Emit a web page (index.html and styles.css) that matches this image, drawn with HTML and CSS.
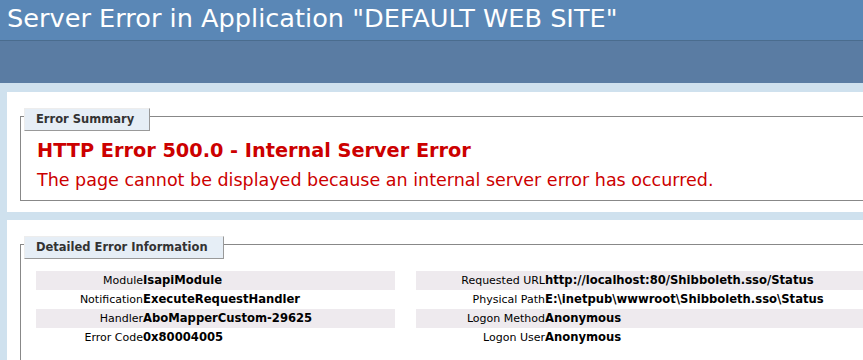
FILE: index.html
```html
<!DOCTYPE html>
<html lang="en">
<head>
    <meta charset="UTF-8">
    <title>IIS 7.5 Detailed Error - 500.0 - Internal Server Error</title>
    <link rel="stylesheet" href="styles.css">
</head>
<body>
    <div class="header">
        <h1>Server Error in Application "DEFAULT WEB SITE"</h1>
    </div>
    <div class="server-version"></div>
    <div class="content">
        <div class="summary-container">
            <div class="fieldset">
                <div class="legend">Error Summary</div>
                <h2>HTTP Error 500.0 - Internal Server Error</h2>
                <h3>The page cannot be displayed because an internal server error has occurred.</h3>
            </div>
        </div>
        <div class="content-container">
            <div class="fieldset">
                <div class="legend">Detailed Error Information</div>
                <div class="details-row">
                    <table class="details-left">
                        <tr class="alt"><th>Module</th><td>IsapiModule</td></tr>
                        <tr><th>Notification</th><td>ExecuteRequestHandler</td></tr>
                        <tr class="alt"><th>Handler</th><td>AboMapperCustom-29625</td></tr>
                        <tr><th>Error Code</th><td>0x80004005</td></tr>
                    </table>
                    <table class="details-right">
                        <tr class="alt"><th>Requested URL</th><td>http://localhost:80/Shibboleth.sso/Status</td></tr>
                        <tr><th>Physical Path</th><td>E:\inetpub\wwwroot\Shibboleth.sso\Status</td></tr>
                        <tr class="alt"><th>Logon Method</th><td>Anonymous</td></tr>
                        <tr><th>Logon User</th><td>Anonymous</td></tr>
                    </table>
                </div>
            </div>
        </div>
    </div>
</body>
</html>
```

FILE: styles.css
```css
html, body {
    height: 100%;
}
body {
    margin: 0;
    font-family: "DejaVu Sans", Verdana, sans-serif;
    font-size: 11px;
    background-color: #cfe1ee;
    overflow: hidden;
}
.header {
    height: 39px;
    padding: 1px 0 0 7px;
    background-color: #5a87b6;
    border-bottom: 1px solid #4a6c8e;
}
h1 {
    margin: 0;
    font-size: 25.6px;
    line-height: 34px;
    font-weight: normal;
    color: #fff;
    white-space: nowrap;
}
.server-version {
    height: 42px;
    background-color: #5a7ca3;
}
.content {
    margin-left: 7px;
    overflow: hidden;
}
.summary-container, .content-container {
    background-color: #fff;
    margin-top: 9px;
    padding: 24px 0 11px 13px;
}
.content-container {
    margin-top: 8px;
    padding-bottom: 20px;
}
.fieldset {
    border: 1px solid #888;
    border-right: none;
}
.legend {
    width: fit-content;
    margin: -9px 0 0 3px;
    padding: 0 15px 0 11px;
    height: 21px;
    line-height: 21px;
    font-size: 11.5px;
    font-weight: bold;
    color: #333;
    background-color: #e6eef6;
    border: 1px solid #ededed;
    border-right-color: #999;
    border-bottom-color: #999;
}
h2 {
    margin: 8px 0 0 16px;
    font-size: 19.3px;
    line-height: 23px;
    color: #cc0000;
    white-space: nowrap;
}
h3 {
    margin: 8px 0 9px 16px;
    font-size: 17.5px;
    line-height: 21px;
    font-weight: normal;
    color: #cc0000;
    white-space: nowrap;
}
.details-row {
    display: flex;
    gap: 21px;
    padding: 12px 0 30px 15px;
}
table {
    flex: none;
    border-collapse: collapse;
    border: none;
}
.details-left {
    width: 359px;
}
.details-right {
    width: 645px;
}
th, td {
    padding: 3px 0;
    height: 13px;
    line-height: 13px;
    white-space: nowrap;
    vertical-align: top;
    color: #000;
}
th {
    font-weight: normal;
    text-align: right;
}
td {
    font-size: 11.6px;
    font-weight: bold;
    text-align: left;
}
.details-left th {
    width: 107px;
}
.details-right th {
    width: 129px;
}
tr.alt th, tr.alt td {
    background-color: #eeeaee;
}
```
